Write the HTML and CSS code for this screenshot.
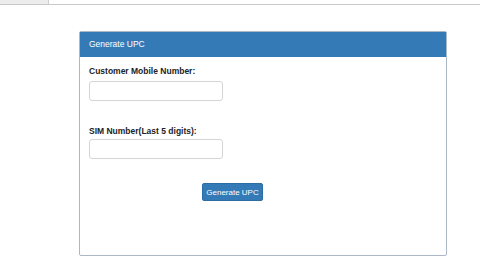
FILE: index.html
```html
<!DOCTYPE html>
<html lang="en">
<head>
    <meta charset="UTF-8">
    <title>Generate UPC</title>
    <link rel="stylesheet" href="styles.css">
</head>
<body>

<div class="toolbar">
    <div class="toolbar-left"></div>
    <div class="address-bar"></div>
</div>

<div class="page">
    <div class="panel">
        <div class="panel-heading">Generate UPC</div>
        <div class="panel-body">
            <div class="form-group">
                <label class="label">Customer Mobile Number:</label>
                <input class="input" type="text">
            </div>
            <div class="form-group">
                <label class="label">SIM Number(Last 5 digits):</label>
                <input class="input" type="text">
            </div>
            <div class="actions">
                <button class="btn">Generate UPC</button>
            </div>
        </div>
    </div>
</div>

</body>
</html>
```

FILE: styles.css
```css
body {
    margin: 0;
    background-color: #fff;
    font-family: "Liberation Sans", Arial, sans-serif;
    color: #333;
}

.toolbar {
    display: flex;
    height: 4px;
    border-bottom: 1px solid #c8c8c8;
    background-color: #f4f4f4;
}

.toolbar-left {
    width: 48px;
    background-color: #ececec;
}

.address-bar {
    flex: 1;
    background-color: #fff;
    border-left: 1px solid #cfcfcf;
}

.page {
    padding: 26px 0 0 79px;
}

.panel {
    width: 368px;
    height: 225px;
    border: 1px solid #aab7c4;
    border-radius: 2px;
    box-sizing: border-box;
}

.panel-heading {
    height: 25px;
    background-color: #337ab7;
    color: #fff;
    font-size: 8.5px;
    line-height: 25px;
    padding-left: 9px;
}

.panel-body {
    padding: 9px 9px 0 9px;
}

.form-group {
    margin-bottom: 25px;
}

.label {
    display: block;
    font-size: 8.5px;
    line-height: 11px;
    font-weight: bold;
    margin-bottom: 4px;
    color: #222;
}

.input {
    display: block;
    width: 134px;
    height: 20px;
    box-sizing: border-box;
    border: 1px solid #d4d4d4;
    border-radius: 3px;
    padding: 0;
}

.form-group + .form-group {
    margin-bottom: 24px;
}

.form-group + .form-group .label {
    margin-bottom: 2px;
}

.actions {
    display: flex;
    padding-left: 113px;
}

.btn {
    background-color: #337ab7;
    border: 1px solid #2e6da4;
    border-radius: 2px;
    color: #fff;
    font-family: "Liberation Sans", Arial, sans-serif;
    font-size: 8px;
    height: 18px;
    width: 61px;
    padding: 0;
}
```
